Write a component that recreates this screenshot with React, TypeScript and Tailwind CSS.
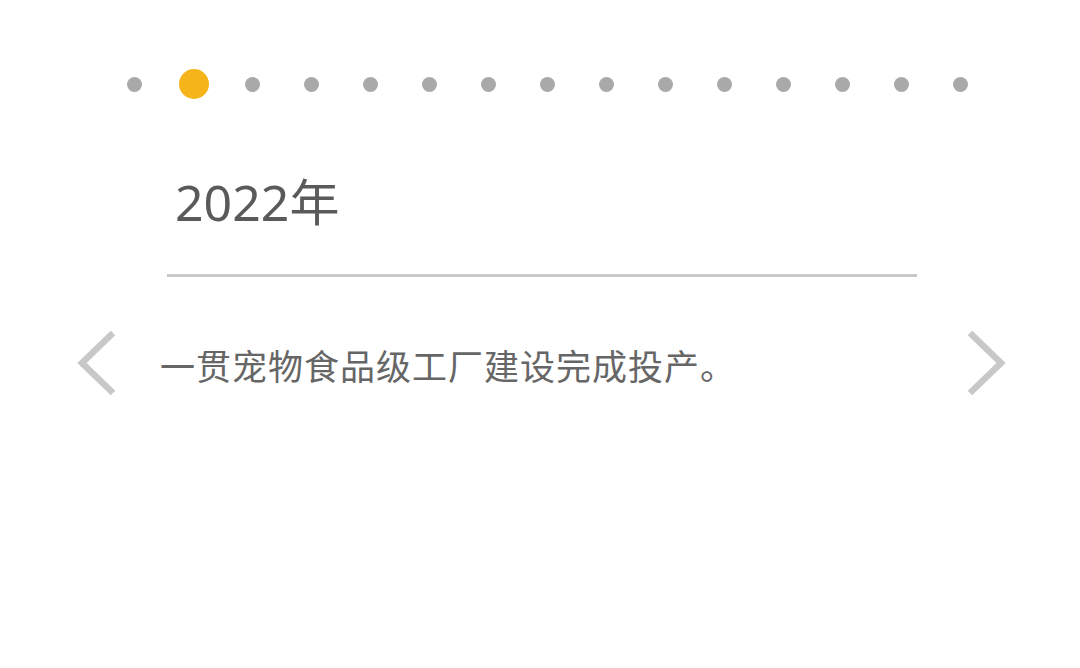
import React from "react";

const dots = Array.from({ length: 15 }, (_, i) => i);

function Chevron({ dir }: { dir: "left" | "right" }) {
  return (
    <svg width="42" height="66" viewBox="0 0 42 66" fill="none">
      <path
        d={dir === "left" ? "M37 2 L6 32 L37 62" : "M6 2 L37 32 L6 62"}
        stroke="#c8c8c8"
        strokeWidth="6.5"
        strokeLinejoin="miter"
      />
    </svg>
  );
}

export default function App() {
  const active = 1;

  return (
    <div
      className="flex h-[668px] w-[1080px] flex-col bg-white"
      style={{ fontFamily: '"Noto Sans", "Noto Sans CJK SC", sans-serif' }}
    >
      {/* timeline dots */}
      <div className="flex pl-[105px] pt-[69px]">
        {dots.map((i) => (
          <div key={i} className="flex h-[30px] w-[59px] items-center justify-center">
            {i === active ? (
              <span className="h-[30px] w-[30px] rounded-full bg-[#f5b41a]" />
            ) : (
              <span className="h-[15px] w-[15px] rounded-full bg-[#a9a9a9]" />
            )}
          </div>
        ))}
      </div>

      {/* year */}
      <div className="mt-[78px] pl-[175px] text-[50px] leading-[50px] text-[#5a5a5a]">2022年</div>

      <div className="ml-[167px] mt-[47px] h-[3px] w-[750px] bg-[#c9c9c9]" />

      {/* content */}
      <div className="mt-[54px] flex h-[66px] items-center pl-[76px] pr-[74px]">
        <Chevron dir="left" />
        <p
          className="ml-[42px] mt-[1px] flex-1 text-[35px] leading-[35px] tracking-[1px] text-[#666666]"
          style={{ fontFamily: '"Noto Sans CJK SC", sans-serif' }}
        >
          一贯宠物食品级工厂建设完成投产。
        </p>
        <Chevron dir="right" />
      </div>
    </div>
  );
}
